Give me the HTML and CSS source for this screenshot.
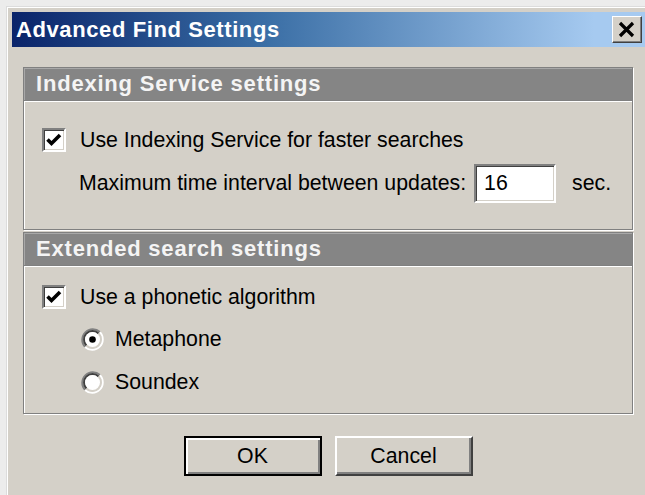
FILE: index.html
```html
<!DOCTYPE html>
<html lang="en">
<head>
<meta charset="utf-8">
<title>Advanced Find Settings</title>
<link rel="stylesheet" href="styles.css">
</head>
<body>
<div class="window">
  <div class="titlebar">
    <span class="title">Advanced Find Settings</span>
    <button class="close" type="button" aria-label="Close">
      <svg width="28" height="25" viewBox="0 0 28 25"><path d="M7 6 L20 19 M20 6 L7 19" stroke="#000" stroke-width="3.2" fill="none"/></svg>
    </button>
  </div>

  <div class="content">
    <section class="group">
      <div class="group-head">Indexing Service settings</div>
      <div class="group-body body-index">
        <label class="row check-row">
          <span class="checkbox">
            <svg width="20" height="20" viewBox="0 0 20 20"><path d="M3.5 9.5 L7.5 13.5 L16 5" stroke="#000" stroke-width="3.6" fill="none"/></svg>
          </span>
          <span>Use Indexing Service for faster searches</span>
        </label>
        <div class="row interval-row">
          <span>Maximum time interval between updates:</span>
          <span class="field">16</span>
          <span class="unit">sec.</span>
        </div>
      </div>
    </section>

    <section class="group">
      <div class="group-head">Extended search settings</div>
      <div class="group-body body-extended">
        <label class="row check-row">
          <span class="checkbox">
            <svg width="20" height="20" viewBox="0 0 20 20"><path d="M3.5 9.5 L7.5 13.5 L16 5" stroke="#000" stroke-width="3.6" fill="none"/></svg>
          </span>
          <span>Use a phonetic algorithm</span>
        </label>
        <label class="row radio-row first-radio">
          <svg class="radio" width="23" height="23" viewBox="0 0 23 23">
            <path d="M4.08 18.92 A10.5 10.5 0 0 1 18.92 4.08" stroke="#808080" stroke-width="2" fill="none"/>
            <path d="M18.92 4.08 A10.5 10.5 0 0 1 4.08 18.92" stroke="#fff" stroke-width="2" fill="none"/>
            <path d="M5.49 17.51 A8.5 8.5 0 0 1 17.51 5.49" stroke="#404040" stroke-width="2" fill="none"/>
            <path d="M17.51 5.49 A8.5 8.5 0 0 1 5.49 17.51" stroke="#d4d0c8" stroke-width="2" fill="none"/>
            <circle cx="11.5" cy="11.5" r="7.5" fill="#fff"/>
            <circle cx="11.5" cy="11.5" r="3.3" fill="#000"/>
          </svg>
          <span>Metaphone</span>
        </label>
        <label class="row radio-row">
          <svg class="radio" width="23" height="23" viewBox="0 0 23 23">
            <path d="M4.08 18.92 A10.5 10.5 0 0 1 18.92 4.08" stroke="#808080" stroke-width="2" fill="none"/>
            <path d="M18.92 4.08 A10.5 10.5 0 0 1 4.08 18.92" stroke="#fff" stroke-width="2" fill="none"/>
            <path d="M5.49 17.51 A8.5 8.5 0 0 1 17.51 5.49" stroke="#404040" stroke-width="2" fill="none"/>
            <path d="M17.51 5.49 A8.5 8.5 0 0 1 5.49 17.51" stroke="#d4d0c8" stroke-width="2" fill="none"/>
            <circle cx="11.5" cy="11.5" r="7.5" fill="#fff"/>
          </svg>
          <span>Soundex</span>
        </label>
      </div>
    </section>

    <div class="buttons">
      <button class="btn btn-default" type="button">OK</button>
      <button class="btn" type="button">Cancel</button>
    </div>
  </div>
</div>
</body>
</html>
```

FILE: styles.css
```css
* {
  box-sizing: border-box;
}

body {
  margin: 0;
  width: 645px;
  height: 495px;
  overflow: hidden;
  background: #ececec;
  font-family: "Liberation Sans", Arial, sans-serif;
  font-size: 21.3px;
  color: #000;
}

/* dialog frame, running off the right and bottom edges */
.window {
  margin: 6px 0 0 6px;
  width: 639px;
  height: 489px;
  padding: 5px 0 0 5px;
  background: #d4d0c8;
  border-top: 1px solid #dcdcdc;
  border-left: 1px solid #dcdcdc;
  box-shadow: inset 1px 1px #fff;
}

.titlebar {
  height: 35px;
  display: flex;
  align-items: center;
  justify-content: space-between;
  padding-left: 4px;
  background: linear-gradient(to right, #0a246a 0%, #3a6ea5 40%, #a6caf0 92%);
}

.title {
  color: #fff;
  font-weight: bold;
  font-size: 22px;
  letter-spacing: 0.6px;
}

.close {
  width: 30px;
  height: 27px;
  margin-right: 3px;
  padding: 0;
  display: flex;
  background: #d4d0c8;
  border: 1px solid;
  border-color: #fff #404040 #404040 #fff;
  box-shadow: inset -1px -1px #808080;
}

.content {
  padding: 20px 0 0 11px;
}

.group {
  width: 610px;
}

.group + .group {
  margin-top: 2px;
}

.group-head {
  height: 34px;
  display: flex;
  align-items: center;
  padding-left: 12px;
  background: #858585;
  border: 1px solid #808080;
  box-shadow: inset 1px 1px #a8a8a8, 1px 1px #fff;
  color: #f4f4f4;
  font-weight: bold;
  font-size: 22px;
  letter-spacing: 0.8px;
}

.group-body {
  border: 1px solid #808080;
  border-top: none;
  box-shadow: inset 1px 0 #fff, 1px 1px #fff;
}

.body-index {
  height: 129px;
  padding: 27px 0 0 18px;
}

.body-extended {
  height: 148px;
  padding: 19px 0 0 18px;
}

.row {
  display: flex;
  align-items: center;
}

.check-row {
  height: 24px;
  gap: 14px;
}

.checkbox {
  width: 24px;
  height: 24px;
  display: flex;
  background: #fff;
  border: 2px solid;
  border-color: #808080 #fff #fff #808080;
  box-shadow: inset 1px 1px #404040, inset -1px -1px #d4d0c8;
}

.interval-row {
  height: 39px;
  margin-top: 12px;
  padding-left: 37px;
}

.field {
  width: 82px;
  height: 39px;
  margin-left: 8px;
  padding-left: 8px;
  display: flex;
  align-items: center;
  background: #fff;
  border: 2px solid;
  border-color: #808080 #fff #fff #808080;
  box-shadow: inset 1px 1px #404040, inset -1px -1px #d4d0c8;
}

.unit {
  margin-left: 16px;
}

.radio-row {
  height: 23px;
  margin-top: 20px;
  padding-left: 39px;
  gap: 11px;
}

.first-radio {
  margin-top: 19px;
}

.radio {
  flex: none;
}

.buttons {
  width: 610px;
  margin-top: 22px;
  display: flex;
  justify-content: center;
  gap: 13px;
}

.btn {
  width: 138px;
  height: 40px;
  padding: 0;
  background: #d4d0c8;
  font-family: inherit;
  font-size: 21.3px;
  color: #000;
  border: 2px solid;
  border-color: #fff #404040 #404040 #fff;
  box-shadow: inset -2px -2px #808080;
}

.btn-default {
  border: 2px solid #000;
  box-shadow: inset 2px 2px #fff, inset -2px -2px #808080;
}
```
